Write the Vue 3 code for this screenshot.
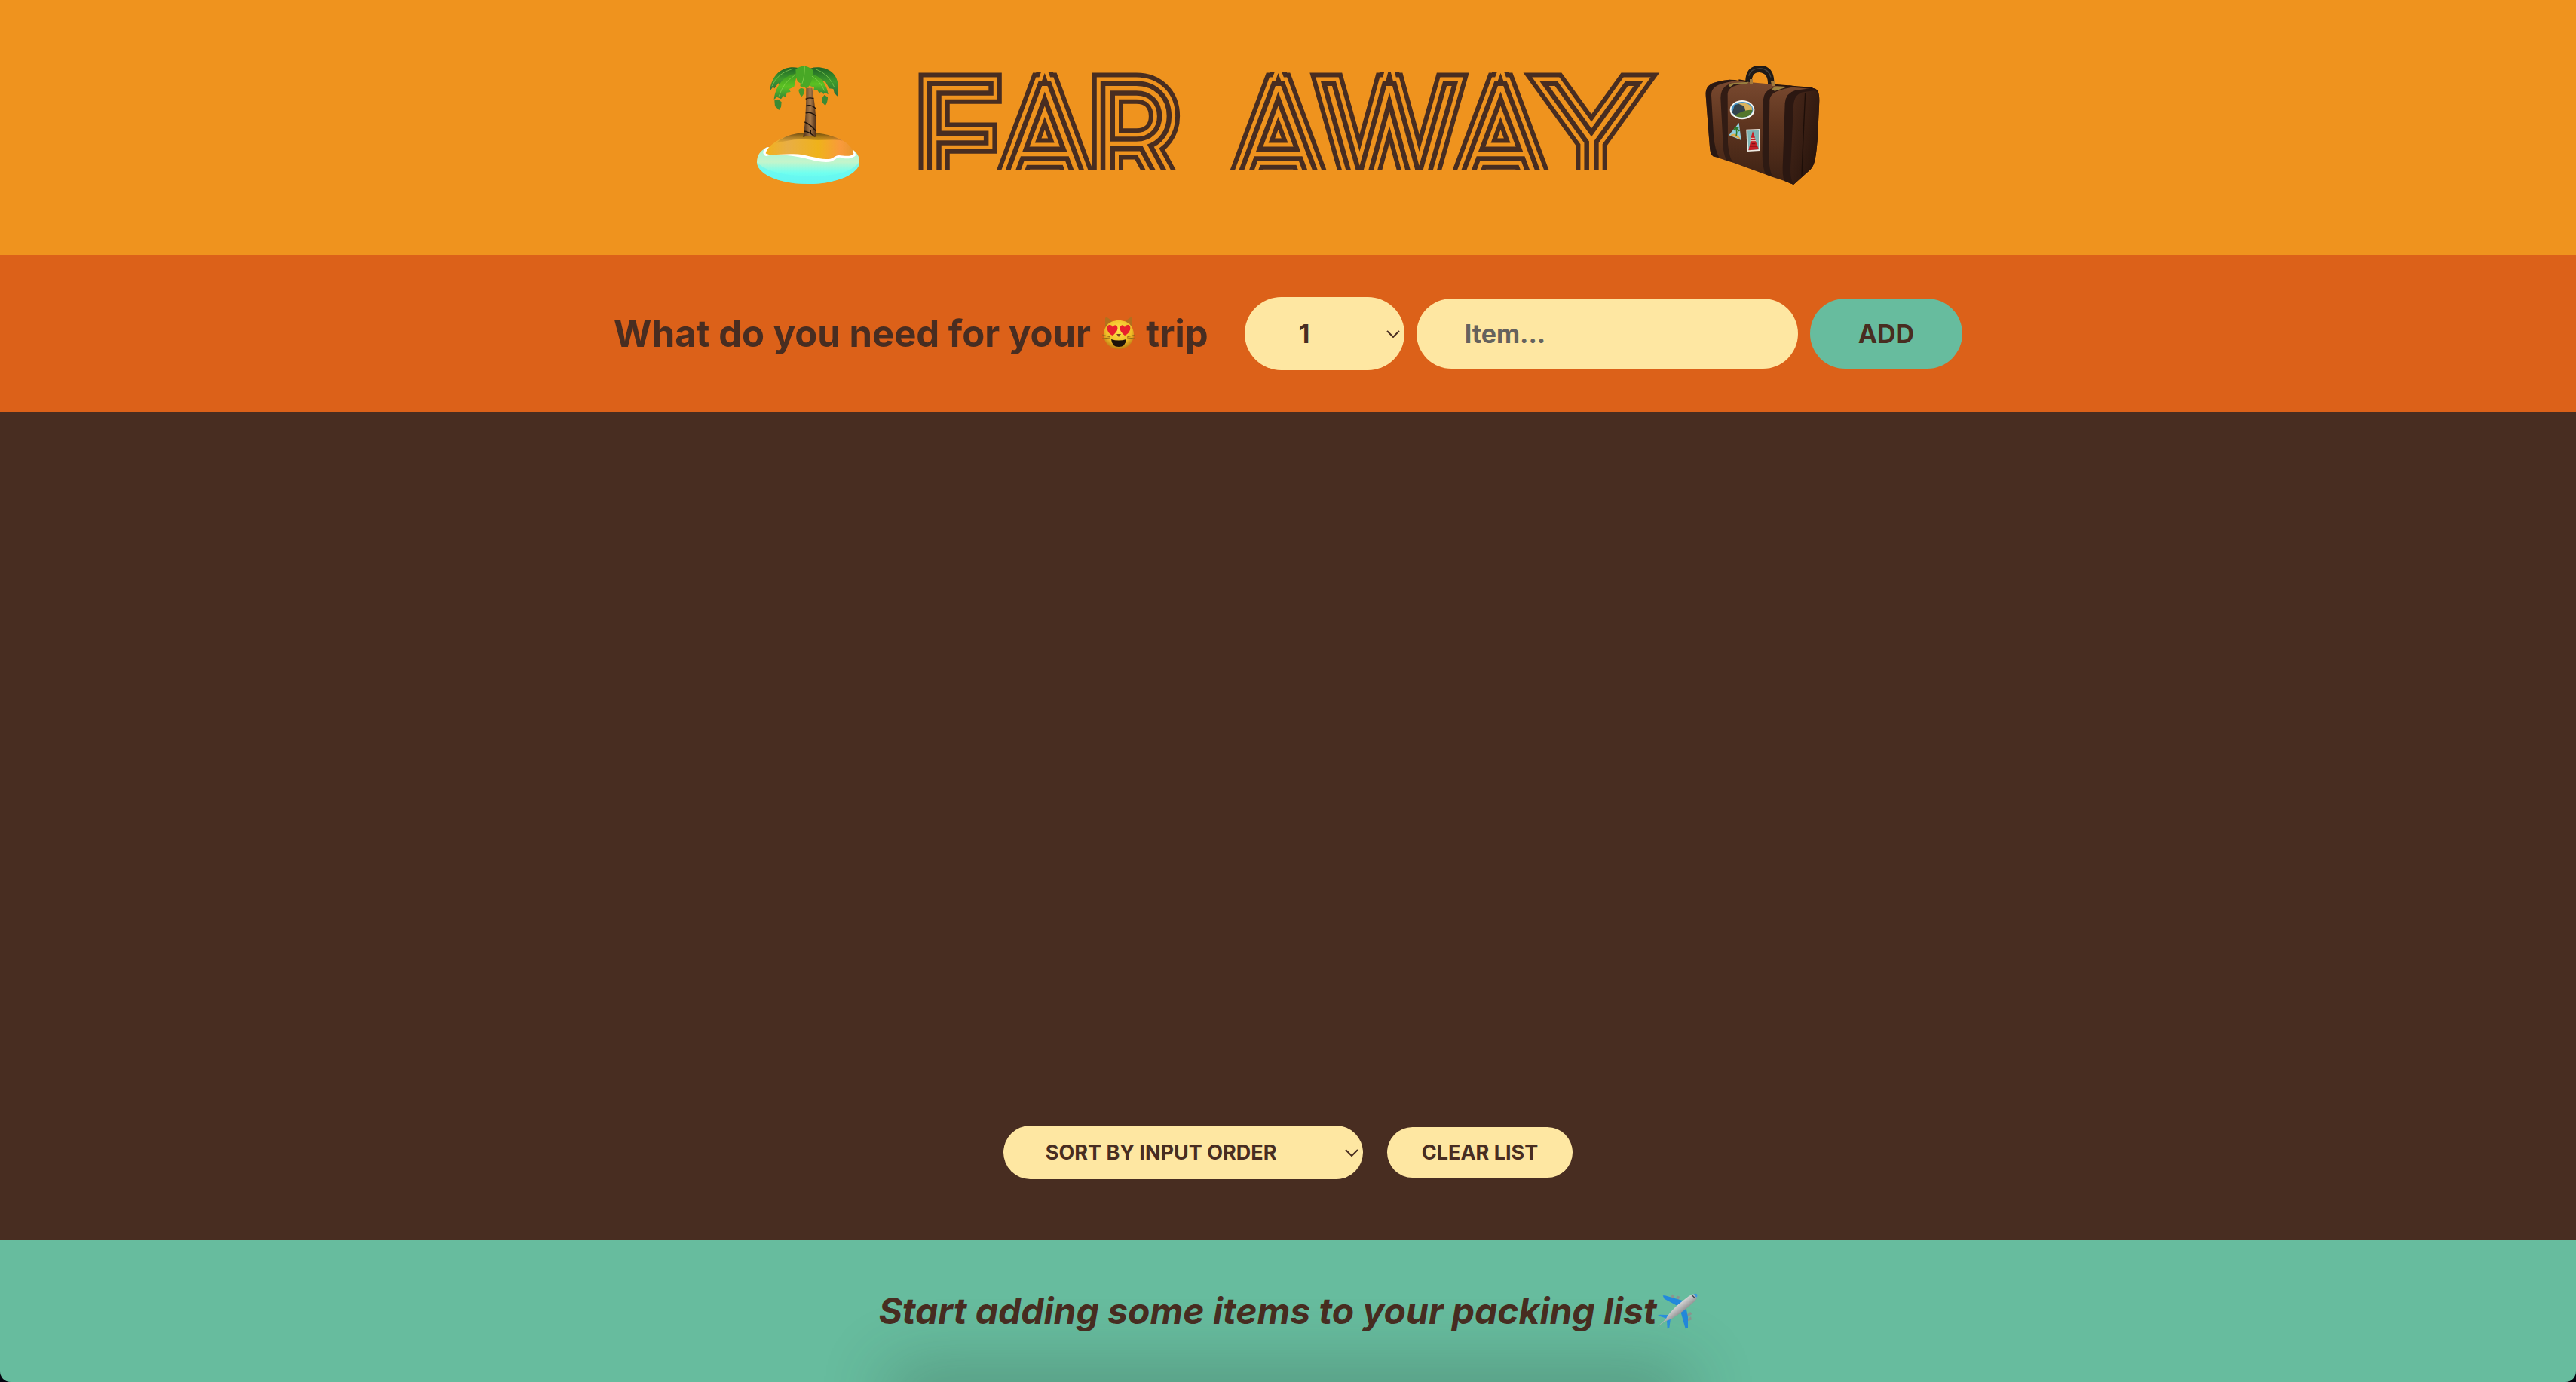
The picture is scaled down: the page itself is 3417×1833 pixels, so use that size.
<script setup>
import { ref } from 'vue'

const quantity = ref(1)
const item = ref('')
const sortBy = ref('input')
const quantities = Array.from({ length: 20 }, (_, i) => i + 1)
</script>

<template>
  <div class="app">
    <header class="banner">
      <svg class="emoji" viewBox="72 48 420 480" aria-hidden="true">
        <defs>
          <linearGradient id="sand" x1="0" x2="1">
            <stop offset="0" stop-color="#f2b21c" />
            <stop offset=".25" stop-color="#e9ae45" />
            <stop offset=".6" stop-color="#efb21a" />
            <stop offset=".85" stop-color="#f99a3c" />
            <stop offset="1" stop-color="#e8962c" />
          </linearGradient>
          <linearGradient id="sandShade" x1="0" y1="0" x2="0" y2="1">
            <stop offset="0" stop-color="#4a3008" stop-opacity=".8" />
            <stop offset="1" stop-color="#8a5a10" stop-opacity="0" />
          </linearGradient>
          <linearGradient id="sea" x1="0" y1="0" x2="0" y2="1">
            <stop offset="0" stop-color="#a5f5dc" />
            <stop offset=".4" stop-color="#c4f5cb" />
            <stop offset=".7" stop-color="#70fff0" />
            <stop offset="1" stop-color="#62f4ee" />
          </linearGradient>
          <linearGradient id="trunk" x1="0" x2="1">
            <stop offset="0" stop-color="#4b2c16" />
            <stop offset=".55" stop-color="#a87b4c" />
            <stop offset="1" stop-color="#4b2c16" />
          </linearGradient>
          <linearGradient id="leafDark" x1="0" y1="0" x2="0" y2="1">
            <stop offset="0" stop-color="#1f6526" />
            <stop offset=".5" stop-color="#3f9a2c" />
            <stop offset="1" stop-color="#2c6b3c" />
          </linearGradient>
          <linearGradient id="leafLight" x1="0" y1="0" x2="0" y2="1">
            <stop offset="0" stop-color="#3c9a22" />
            <stop offset=".5" stop-color="#5cc322" />
            <stop offset="1" stop-color="#338138" />
          </linearGradient>
        </defs>
        <path d="M118 376C90 390 78 410 78 436C80 480 160 522 282 522C400 522 486 480 486 434C486 414 478 400 462 388Z" fill="url(#sea)" />
        <path d="M78 436C80 480 160 522 282 522C400 522 486 480 486 434C450 480 380 492 282 490C180 490 110 470 78 436Z" fill="#66f7f2" opacity=".6" />
        <path d="M118 376C100 386 98 405 114 411C160 402 220 408 270 420C310 430 350 440 376 432C392 426 395 414 412 417C430 424 455 422 470 410C472 400 468 392 462 388Z" fill="#fff" />
        <path d="M113 400C120 370 180 320 282 318C390 318 460 362 463 402C452 414 428 410 405 408C386 408 386 422 362 423C320 426 276 402 220 403C170 402 130 412 113 400Z" fill="url(#sand)" />
        <path d="M150 362C190 325 240 318 282 318C340 318 390 332 420 350C370 342 330 352 288 346C230 340 190 352 150 362Z" fill="url(#sandShade)" />
        <path d="M274 140L298 140C306 190 316 240 313 336Q290 324 262 336C272 270 274 210 274 140Z" fill="url(#trunk)" />
        <path d="M272 184Q286 176 304 182M273 212Q290 202 313 222M272 240Q292 232 314 252M268 276Q290 284 314 312M264 312Q284 312 308 334M292 306V320" fill="none" stroke="#1e1209" stroke-width="4" />
        <path d="M243 60C190 50 138 76 129 154L142 136L148 142L163 121L170 130L192 104L214 92L240 80Z" fill="url(#leafDark)" />
        <path d="M290 62C340 48 402 70 402 140Q402 160 398 173L386 160L382 144L366 142L352 118L330 104L300 86Z" fill="url(#leafDark)" />
        <path d="M238 84C190 84 152 130 146 186L158 176L174 184L183 172L193 176L197 158L212 156L207 144L226 136L232 110Z" fill="url(#leafLight)" />
        <path d="M148 190L162 185L176 196L174 216L166 228L150 212Z" fill="#3c8a34" />
        <path d="M294 84C330 90 356 124 362 166L350 158L343 164L334 156L326 160L318 148L304 150L306 138L283 130Z" fill="url(#leafLight)" />
        <path d="M346 168L360 176Q360 196 350 210L337 196L338 180Z" fill="#3c8a34" />
        <path d="M232 66Q266 40 300 68C302 96 296 120 281 138L273 142L266 134L258 138L250 132L252 122L240 114L234 98Z" fill="#48a826" />
        <path d="M244 148Q256 134 268 148Q266 166 256 175Q246 166 244 148Z" fill="#46992c" />
        <path d="M268 56Q268 96 258 122M226 92Q184 116 166 172M298 94Q334 116 346 150M314 66Q364 84 386 136M220 64Q160 80 138 132" fill="none" stroke="#9be05c" stroke-width="3" stroke-linecap="round" opacity=".6" />
      </svg>
      <h1 class="title">
        <span class="word" data-text="FAR"><span class="line" data-text="FAR">FAR</span></span>
        <span class="word" data-text="AWAY"><span class="line" data-text="AWAY">AWAY</span></span>
      </h1>
      <svg class="emoji" viewBox="70 48 462 480" aria-hidden="true">
        <defs>
          <linearGradient id="leather" x1="0" y1="0" x2="0" y2="1">
            <stop offset="0" stop-color="#7a4a30" />
            <stop offset=".4" stop-color="#603620" />
            <stop offset="1" stop-color="#3b2013" />
          </linearGradient>
          <linearGradient id="side" x1="0" y1="0" x2="1" y2="1">
            <stop offset="0" stop-color="#49281a" />
            <stop offset="1" stop-color="#22110a" />
          </linearGradient>
        </defs>
        <path d="M233 122C232 80 246 51 290 51C334 51 350 82 347 130L322 128C324 96 312 80 288 78C264 78 258 94 258 122Z" fill="#1f1a18" />
        <path d="M246 92Q252 64 290 62Q326 64 334 98" fill="none" stroke="#45403c" stroke-width="4" />
        <path d="M75 170C74 130 90 116 170 107L240 116L500 140C520 142 527 154 527 190L520 340C512 440 506 455 480 475L424 525L388 510L342 495L180 436L104 412C90 400 92 380 88 340Z" fill="url(#leather)" />
        <path d="M75 170C74 130 90 116 170 107L206 109C120 124 97 134 97 170L106 330Q112 390 128 416L104 412C90 400 92 380 88 340Z" fill="#2a1812" />
        <path d="M134 180Q134 130 184 120L226 124C180 132 164 140 162 168L163 360Q168 420 184 436L160 430Q144 410 143 350Z" fill="#321c14" />
        <path d="M303 190Q306 150 340 140L410 130L432 134C350 150 329 160 329 196L326 400Q326 470 342 495L314 484Q300 460 300 400Z" fill="#2e1a13" />
        <path d="M390 200Q394 160 430 150L500 140C520 142 527 154 527 190L520 340C512 440 506 455 480 475L424 525L388 510Q378 490 382 430Z" fill="#2b1711" />
        <path d="M424 210Q428 160 468 156L510 150Q526 160 526 190L519 340C511 440 505 455 479 475L424 524Q408 500 414 430Z" fill="url(#side)" />
        <path d="M471 160Q462 350 457 492" fill="none" stroke="#1d0e08" stroke-width="4" />
        <path d="M165 130L178 121L246 116L240 124L186 126L172 136ZM336 146L350 134L410 132L350 152Z" fill="#9a8140" />
        <path d="M250 105H262V124H250ZM334 114L352 112V132H338Z" fill="#a2793c" />
        <path d="M206 109L240 115M350 128L500 141" stroke="#28150f" stroke-width="6" />
        <ellipse cx="220" cy="227" rx="49" ry="38" fill="#f5f5ef" />
        <ellipse cx="220" cy="226" rx="43" ry="31" fill="#4593c4" />
        <path d="M203 203Q240 194 258 216L260 232L224 236Z" fill="#d9b35d" />
        <path d="M180 238L190 208L206 203L228 212L236 244L196 252Z" fill="#34434c" />
        <path d="M190 250Q230 224 261 228Q256 256 220 257Q200 257 190 250Z" fill="#53762c" />
        <path d="M207 279L216 348L167 328Z" fill="#8ecfe0" />
        <path d="M172 328Q196 312 214 344Z" fill="#e0ac4a" />
        <path d="M196 332Q200 318 197 304M186 308Q196 294 209 312M188 300L206 298" fill="none" stroke="#2f7a2b" stroke-width="5" />
        <path d="M236 305L291 303V390L240 393Z" fill="#efece3" />
        <path d="M241 310L286 308V385L245 388Z" fill="#7fb5b4" />
        <path d="M262 312L270 335L273 350L286 384L245 388L254 350L256 334Z" fill="#c51f26" />
        <path d="M254 340H270M252 350H274" stroke="#e8dccb" stroke-width="3" />
        <path d="M250 372H280M258 362H272" stroke="#701014" stroke-width="3" />
      </svg>
    </header>

    <form class="add-form" @submit.prevent>
      <h3 class="question">
        What do you need for your
        <svg class="cat" viewBox="0 0 46 46" role="img" aria-label="heart eyes cat">
          <defs>
            <radialGradient id="fur" cx=".5" cy=".35" r=".65">
              <stop offset="0" stop-color="#ffe34a" />
              <stop offset=".65" stop-color="#f0bd27" />
              <stop offset="1" stop-color="#bd7812" />
            </radialGradient>
          </defs>
          <path d="M5 22L5 3Q6 1 9 3L18 10ZM41 22L41 3Q40 1 37 3L28 10Z" fill="#b3701d" />
          <path d="M23 6C37 6 43 15 43 26C42 36 35 44 23 44C11 44 4 36 3 26C3 15 9 6 23 6Z" fill="url(#fur)" />
          <path d="M1 25L12 28M1 30L12 29M45 25L34 28M45 30L34 29" stroke="#9a6a18" />
          <path d="M15 26C6 22 6 12 11 12Q14 12 15 15Q17 11 20 13C24 17 19 23 15 26ZM31 26C40 22 40 12 35 12Q32 12 31 15Q29 11 26 13C22 17 27 23 31 26Z" fill="#e8202c" />
          <path d="M20 24H26L23 28Z" fill="#7c4524" />
          <path d="M13 31Q23 34 33 31Q32 41 23 41Q14 41 13 31Z" fill="#1d1109" />
        </svg>
        trip
      </h3>
      <span class="picker">
        <select v-model="quantity" class="control quantity" aria-label="Quantity">
          <option v-for="n in quantities" :key="n" :value="n">{{ n }}</option>
        </select>
        <svg class="chevron" viewBox="0 0 18 10" aria-hidden="true"><path d="M1 1L9 9L17 1" /></svg>
      </span>
      <input v-model="item" class="control item" type="text" placeholder="Item..." aria-label="Item" />
      <button class="control add">ADD</button>
    </form>

    <main class="list">
      <div class="actions">
        <span class="picker">
          <select v-model="sortBy" class="control sort" aria-label="Sort">
            <option value="input">SORT BY INPUT ORDER</option>
            <option value="description">SORT BY DESCRIPTION</option>
            <option value="packed">SORT BY PACKED STATUS</option>
          </select>
          <svg class="chevron" viewBox="0 0 18 10" aria-hidden="true"><path d="M1 1L9 9L17 1" /></svg>
        </span>
        <button class="control clear" type="button">CLEAR LIST</button>
      </div>
    </main>

    <footer class="stats">
      <em>Start adding some items to your packing list</em>
      <svg class="plane" viewBox="95 72 162 144" aria-hidden="true">
        <defs>
          <linearGradient id="hull" x1="0" y1="0" x2="1" y2="1">
            <stop offset=".35" stop-color="#f4f4f4" />
            <stop offset=".6" stop-color="#8f8f90" />
          </linearGradient>
        </defs>
        <path d="M148 88L157 77L165 80L160 92ZM168 92L178 83L187 87L180 98ZM213 158L228 147L234 156L218 166ZM215 176L230 166L233 178L219 184Z" fill="#8b9590" />
        <path d="M118 82L127 82L204 104L182 126L124 95ZM184 128L206 108L218 168V212L208 214Z" fill="#2389dc" />
        <path d="M98 161L108 158L146 160L134 174ZM134 182L150 168L144 210L136 214Z" fill="#2b8fe0" />
        <path d="M96 206L130 176C142 148 186 110 222 84C238 74 252 72 256 78C256 92 248 104 238 111C204 142 170 166 146 178L128 184Z" fill="url(#hull)" />
        <path d="M244 75Q256 73 256 80Q256 86 252 90Q246 82 240 77Z" fill="#3a9bdc" />
        <path d="M234 80L248 94" stroke="#3c4650" stroke-width="4" />
      </svg>
    </footer>
  </div>
</template>

<style>
body {
  margin: 0;
  background: #04040f;
}
</style>

<style scoped>
.app {
  --dark: #482d21;
  --cream: #fee7a2;
  --green: #67bc9e;
  --amber: #ef931e;
  display: grid;
  grid-template-rows: auto auto 1fr auto;
  min-height: 100vh;
  border-radius: 0 0 14px 14px;
  overflow: hidden;
  color: var(--dark);
  font-family: Inter, "Open Sans", sans-serif;
  font-weight: 700;
}

.banner {
  display: flex;
  justify-content: center;
  align-items: flex-start;
  gap: 74px;
  padding: 86px 0 92px;
  background: var(--amber);
}

.emoji {
  height: 160px;
}

/* Nested outlines around a hairline face give the striped lettering. */
.title {
  display: flex;
  gap: 74px;
  margin: 10px 16px -46px 0;
  font-weight: 100;
  font-size: 188px;
  line-height: 175px;
  font-kerning: none;
}

.word {
  display: grid;
  clip-path: inset(0 -40px 45px);
}

.word::before,
.line {
  grid-area: 1 / 1;
}

.word::before {
  content: attr(data-text);
  color: var(--dark);
  -webkit-text-stroke: 37px var(--dark);
}

.line {
  position: relative;
  color: var(--amber);
  -webkit-text-stroke: 25px var(--amber);
}

.line::before,
.line::after {
  content: attr(data-text);
  position: absolute;
  inset: 0;
}

.line::before {
  color: var(--dark);
  -webkit-text-stroke: 15px var(--dark);
}

.line::after {
  color: var(--amber);
  -webkit-text-stroke: 2px var(--amber);
}

.add-form {
  display: flex;
  justify-content: center;
  align-items: center;
  gap: 16px;
  padding: 56px 0;
  background: #dc6119;
}

.question {
  margin: 0 32px 0 0;
  font-size: 49px;
  line-height: 60px;
}

.cat {
  width: 46px;
  height: 46px;
  margin: 0 2px;
  vertical-align: -5px;
}

.picker {
  position: relative;
  display: flex;
}

.control {
  box-sizing: border-box;
  border: 0;
  border-radius: 100px;
  background: var(--cream);
  color: var(--dark);
  font: inherit;
  appearance: none;
}

.chevron {
  position: absolute;
  top: 50%;
  right: 6px;
  width: 18px;
  height: 10px;
  margin-top: -5px;
  fill: none;
  stroke: var(--dark);
  stroke-width: 2;
  pointer-events: none;
}

.quantity,
.item,
.add {
  height: 93px;
  padding: 0 64px;
  font-size: 34px;
}

.quantity {
  width: 212px;
  height: 97px;
  padding: 0 72px;
}

.item {
  width: 506px;
}

.item::placeholder {
  color: #65625d;
  opacity: 1;
}

.add {
  background: var(--green);
}

.list {
  display: flex;
  flex-direction: column;
  justify-content: flex-end;
  padding: 80px 0;
  background: var(--dark);
}

.actions {
  display: flex;
  justify-content: center;
  align-items: center;
  gap: 32px;
}

.sort,
.clear {
  height: 67px;
  padding: 0 46px;
  font-size: 27px;
}

.sort {
  width: 477px;
  height: 71px;
  padding: 0 56px;
}

.stats {
  position: relative;
  display: flex;
  justify-content: center;
  align-items: center;
  padding: 64px 0;
  background: var(--green);
  font-size: 48px;
  line-height: 61px;
}

.stats::after {
  content: "";
  position: absolute;
  top: 100%;
  left: 35%;
  right: 35%;
  height: 40px;
  box-shadow: 0 0 90px 16px rgb(40 60 50 / 32%);
}

.plane {
  width: 54px;
  height: 48px;
}
</style>
